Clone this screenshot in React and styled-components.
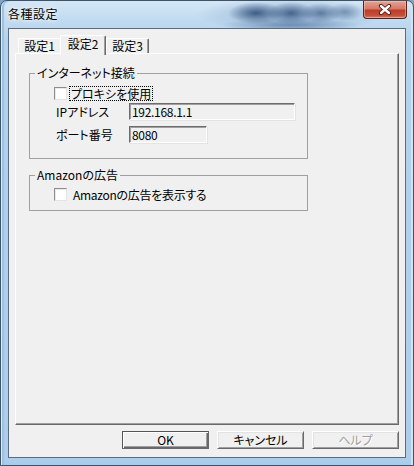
import React from "react";
import styled, { createGlobalStyle } from "styled-components";

const GlobalStyle = createGlobalStyle`
  html, body { margin: 0; padding: 0; background: #7fa6c9; }
  body { width: 414px; height: 466px; overflow: hidden; }
  * { box-sizing: border-box; }
`;

const FONT = `"Noto Sans CJK JP", "Noto Sans", "Liberation Sans", sans-serif`;

const Window = styled.div`
  width: 414px;
  height: 466px;
  display: flex;
  flex-direction: column;
  font-family: ${FONT};
  font-size: 12px;
  font-feature-settings: "palt";
  color: #000;
  border: 1px solid #3f5368;
  border-radius: 7px 7px 0 0;
  box-shadow: inset 1px 0 0 #dcecf8, inset 3px 0 0 #9cc1e2, inset -2px 0 0 #cfe3f3, inset 0 -2px 0 #9fd0ee;
  background:
    radial-gradient(ellipse 28px 11px at 255px 12px, rgba(35, 65, 110, 0.8), transparent),
    radial-gradient(ellipse 24px 11px at 290px 12px, rgba(35, 65, 110, 0.7), transparent),
    radial-gradient(ellipse 20px 10px at 320px 12px, rgba(45, 75, 120, 0.6), transparent),
    radial-gradient(ellipse 18px 9px at 344px 11px, rgba(55, 85, 130, 0.5), transparent),
    radial-gradient(ellipse 70px 7px at 290px 24px, rgba(60, 95, 140, 0.55), transparent),
    radial-gradient(ellipse 95px 18px at 290px 14px, rgba(110, 145, 185, 0.55), transparent),
    linear-gradient(180deg, #d4e7f6 0%, #c0daf0 20px, #b3d2ec 40px, #aecdea 100%);
  overflow: hidden;
`;

const TitleBar = styled.div`
  height: 27px;
  display: flex;
  align-items: flex-start;
  padding-left: 7px;
`;

const Title = styled.span`
  margin-top: 6px;
  font-size: 12px;
  line-height: 14px;
  letter-spacing: 0.5px;
  color: #000;
  text-shadow: 0 0 6px rgba(255, 255, 255, 0.95), 0 0 3px rgba(255, 255, 255, 0.9);
`;

const CloseButton = styled.div`
  margin-left: auto;
  margin-right: 6px;
  width: 44px;
  height: 18px;
  display: flex;
  align-items: center;
  justify-content: center;
  border: 1px solid #5e1f18;
  border-top: none;
  border-radius: 0 0 4px 4px;
  background: linear-gradient(180deg, #e5a594 0%, #d37a66 45%, #bd3d2a 55%, #c4503a 85%, #d9806a 100%);
  box-shadow: inset 0 0 0 1px rgba(255, 210, 200, 0.45);
`;

const Client = styled.div`
  flex: none;
  height: 430px;
  margin: 0 7px 0 7px;
  border: 1px solid #5a6d80;
  background: #f0f0f0;
  display: flex;
  flex-direction: column;
  padding: 6px 6px 0 6px;
`;

const TabsRow = styled.div`
  height: 18px;
  display: flex;
  align-items: flex-end;
  padding-left: 3px;
`;

const Tab = styled.div`
  position: relative;
  width: ${(p) => p.$w}px;
  height: ${(p) => (p.$active ? 20 : 15)}px;
  margin-bottom: ${(p) => (p.$active ? -2 : 0)}px;
  z-index: ${(p) => (p.$active ? 2 : 1)};
  background: #f0f0f0;
  border-top: 1px solid #fff;
  border-left: 1px solid #fff;
  border-right: ${(p) => (p.$noRight ? "none" : "1px solid #696969")};
  box-shadow: ${(p) => (p.$noRight ? "none" : "inset -1px 0 0 #a0a0a0")};
  border-radius: 2px 2px 0 0;
  text-align: center;
  font-size: 12px;
  line-height: 14px;
  padding-top: ${(p) => (p.$active ? 1 : 0)}px;
  white-space: nowrap;
`;

const Panel = styled.div`
  flex: none;
  height: 372px;
  border-top: 1px solid #fff;
  border-left: 1px solid #fff;
  border-right: 1px solid #696969;
  border-bottom: 1px solid #696969;
  box-shadow: inset -1px -1px 0 #a0a0a0;
  display: flex;
  flex-direction: column;
  padding: 12px 0 0 13px;
`;

const Group = styled.fieldset`
  margin: 0 0 ${(p) => p.$mb || 0}px 0;
  padding: 0;
  width: 279px;
  min-width: 0;
  border: 1px solid #a0a0a0;
`;

const Legend = styled.legend`
  margin-left: 5px;
  padding: 0 2px;
  font-size: 12px;
  line-height: 14px;
`;

const GroupBody = styled.div`
  display: flex;
  flex-direction: column;
  padding: ${(p) => p.$pt}px 0 ${(p) => p.$pb}px 24px;
`;

const CheckRow = styled.label`
  display: flex;
  align-items: center;
  height: 15px;
`;

const CheckBox = styled.span`
  width: 13px;
  height: 13px;
  flex: none;
  background: #fff;
  border-top: 1px solid #8d8d8d;
  border-left: 1px solid #8d8d8d;
  border-right: 1px solid #e4e4e4;
  border-bottom: 1px solid #e4e4e4;
  box-shadow: inset 1px 1px 0 #e9e9e9;
`;

const CheckText = styled.span`
  margin-left: ${(p) => (p.$focus ? 2 : 4)}px;
  padding: 0 1px;
  line-height: 13px;
  border: 1px ${(p) => (p.$focus ? "dotted #000" : "solid transparent")};
  white-space: nowrap;
  letter-spacing: ${(p) => (p.$tight ? "-0.3px" : "0")};
`;

const FieldRow = styled.div`
  display: flex;
  align-items: center;
  margin-top: ${(p) => p.$mt}px;
  height: 17px;
`;

const FieldLabel = styled.span`
  width: 75px;
  padding-left: 2px;
  flex: none;
  white-space: nowrap;
`;

const TextBox = styled.div`
  width: ${(p) => p.$w}px;
  height: 17px;
  background: #f0f0f0;
  border-top: 1px solid #6d6d6d;
  border-left: 1px solid #6d6d6d;
  border-right: 1px solid #fff;
  border-bottom: 1px solid #fff;
  box-shadow: inset 1px 1px 0 #a0a0a0, 1px 1px 0 #e3e3e3;
  padding: 1px 0 0 2px;
  font-size: 12px;
  line-height: 14px;
  white-space: nowrap;
  letter-spacing: -0.3px;
`;

const ButtonRow = styled.div`
  display: flex;
  justify-content: flex-end;
  gap: 8px;
  margin-top: 6px;
`;

const Button = styled.div`
  width: 87px;
  height: 18px;
  display: flex;
  align-items: center;
  justify-content: center;
  background: #f0f0f0;
  font-size: 12px;
  line-height: 14px;
  color: ${(p) => (p.$disabled ? "#a0a0a0" : "#000")};
  text-shadow: ${(p) => (p.$disabled ? "1px 1px 0 #fff" : "none")};
  border: 1px solid ${(p) => (p.$default ? "#555" : "transparent")};
  border-top-color: ${(p) => (p.$default ? "#555" : "#fff")};
  border-left-color: ${(p) => (p.$default ? "#555" : "#fff")};
  border-right-color: #696969;
  border-bottom-color: #696969;
  box-shadow: ${(p) =>
    p.$default
      ? "inset 1px 1px 0 #fff, inset -1px -1px 0 #696969, inset -2px -2px 0 #a0a0a0"
      : "inset 1px 1px 0 #e3e3e3, inset -1px -1px 0 #a0a0a0"};
`;

function CloseGlyph() {
  return (
    <svg width="14" height="11" viewBox="0 0 14 11">
      <path d="M3 2 L11 9 M11 2 L3 9" stroke="#4a1510" strokeWidth="4.2" strokeLinecap="round" />
      <path d="M3 2 L11 9 M11 2 L3 9" stroke="#fff" strokeWidth="2.4" strokeLinecap="round" />
    </svg>
  );
}

export default function App() {
  return (
    <>
      <GlobalStyle />
      <Window>
        <TitleBar>
          <Title>各種設定</Title>
          <CloseButton>
            <CloseGlyph />
          </CloseButton>
        </TitleBar>
        <Client>
          <TabsRow>
            <Tab $w={42} $noRight>設定1</Tab>
            <Tab $w={46} $active>設定2</Tab>
            <Tab $w={43}>設定3</Tab>
          </TabsRow>
          <Panel>
            <Group $mb={9}>
              <Legend>インターネット接続</Legend>
              <GroupBody $pt={6} $pb={15}>
                <CheckRow>
                  <CheckBox />
                  <CheckText $focus>プロキシを使用</CheckText>
                </CheckRow>
                <FieldRow $mt={2}>
                  <FieldLabel>IPアドレス</FieldLabel>
                  <TextBox $w={166}>192.168.1.1</TextBox>
                </FieldRow>
                <FieldRow $mt={6}>
                  <FieldLabel>ポート番号</FieldLabel>
                  <TextBox $w={78}>8080</TextBox>
                </FieldRow>
              </GroupBody>
            </Group>
            <Group>
              <Legend>Amazonの広告</Legend>
              <GroupBody $pt={5} $pb={8}>
                <CheckRow>
                  <CheckBox />
                  <CheckText $tight>Amazonの広告を表示する</CheckText>
                </CheckRow>
              </GroupBody>
            </Group>
          </Panel>
          <ButtonRow>
            <Button $default>OK</Button>
            <Button>キャンセル</Button>
            <Button $disabled>ヘルプ</Button>
          </ButtonRow>
        </Client>
      </Window>
    </>
  );
}
